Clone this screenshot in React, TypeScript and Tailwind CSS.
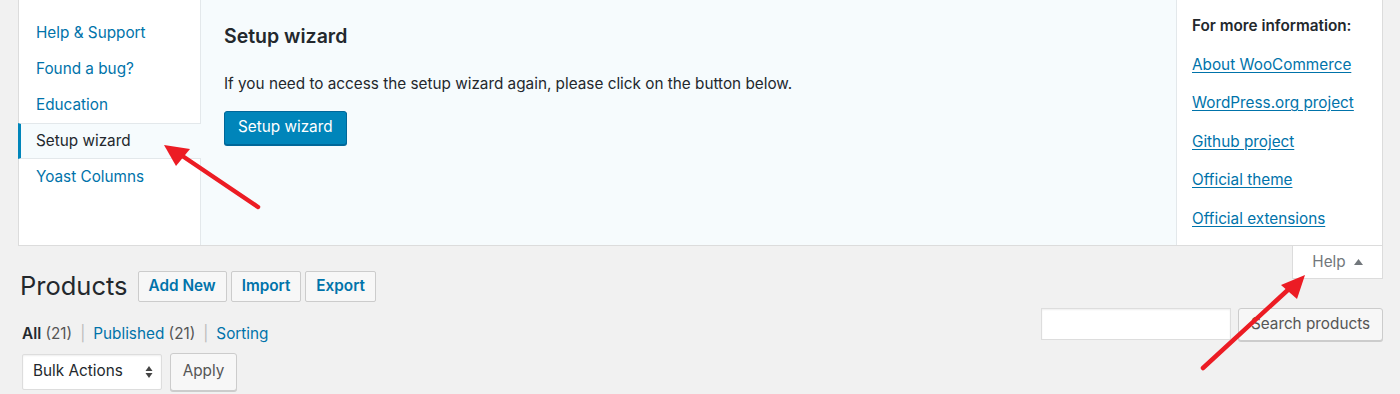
import React from 'react'

const tabs = ['Help & Support', 'Found a bug?', 'Education', 'Setup wizard', 'Yoast Columns']
const moreLinks = ['About WooCommerce', 'WordPress.org project', 'Github project', 'Official theme', 'Official extensions']

function HelpPanel() {
    return (
        <div className="ml-[18px] mr-[17px] h-[246px] flex bg-white border-x border-b border-[#dcdcdc]">
            <ul className="w-[181px] pt-[15px]">
                {tabs.map((t) =>
                    t === 'Setup wizard' ? (
                        <li
                            key={t}
                            className="relative h-[36px] -mr-px flex items-center pl-[15px] bg-[#f6fbfd] border-y border-[#e3e8eb] border-l-[3px] border-l-[#0085ba] -ml-px text-[#23282d]"
                        >
                            {t}
                        </li>
                    ) : (
                        <li key={t} className="h-[36px] flex items-center pl-[17px] text-[#0073aa]">
                            {t}
                        </li>
                    ),
                )}
            </ul>
            <div className="flex-1 bg-[#f6fbfd] border-l border-[#e3e8eb] pl-[23px] pt-[23px]">
                <h2 className="text-[19.5px] font-semibold text-[#23282d] leading-[26px]">Setup wizard</h2>
                <p className="mt-[24px] text-[#23282d]">
                    If you need to access the setup wizard again, please click on the button below.
                </p>
                <button className="mt-[15px] h-[34px] px-[13px] rounded-[3px] bg-[#0085ba] border border-[#006799] text-white shadow-[0_1px_0_#006799]">
                    Setup wizard
                </button>
            </div>
            <div className="w-[206px] bg-white border-l border-[#e3e8eb] pl-[15px] pt-[15px]">
                <p className="font-semibold text-[#23282d]">For more information:</p>
                <ul className="mt-[16px] flex flex-col gap-[16.5px]">
                    {moreLinks.map((l) => (
                        <li key={l} className="leading-[22px] text-[#0073aa] underline underline-offset-2">
                            {l}
                        </li>
                    ))}
                </ul>
            </div>
        </div>
    )
}

function Arrows() {
    return (
        <svg className="absolute inset-0 pointer-events-none" width="1400" height="394">
            <line x1="258" y1="207" x2="178" y2="153" stroke="#ec1c24" strokeWidth="4.5" strokeLinecap="round" />
            <polygon points="164,145 190,149 176,166" fill="#ec1c24" />
            <line x1="1203" y1="368" x2="1290" y2="288" stroke="#ec1c24" strokeWidth="4.5" strokeLinecap="round" />
            <polygon points="1305,275 1281,285 1297,299" fill="#ec1c24" />
        </svg>
    )
}

export default function App() {
    return (
        <div className="relative w-[1400px] h-[394px] overflow-hidden bg-[#f1f1f1] font-['Inter',sans-serif] text-[15.3px]">
            <HelpPanel />
            <div className="flex justify-between">
                <div className="pl-[20px]">
                    <div className="flex items-center mt-[22px] h-[36px]">
                        <h1 className="text-[25.5px] text-[#23282d] mr-[10px] leading-none">Products</h1>
                        <div className="flex gap-[4px]">
                            {['Add New', 'Import', 'Export'].map((b) => (
                                <span
                                    key={b}
                                    className="h-[31px] px-[10px] flex items-center border border-[#cccccc] rounded-[2px] bg-[#f7f7f7] text-[#0073aa] font-semibold"
                                >
                                    {b}
                                </span>
                            ))}
                        </div>
                    </div>
                    <div className="mt-[19px] pl-[2px] flex items-center gap-[8px] text-[#555]">
                        <span>
                            <b className="text-[#23282d] font-semibold">All</b> (21)
                        </span>
                        <span className="text-[#bbb]">|</span>
                        <span>
                            <span className="text-[#0073aa]">Published</span> (21)
                        </span>
                        <span className="text-[#bbb]">|</span>
                        <span className="text-[#0073aa]">Sorting</span>
                    </div>
                    <div className="mt-[8px] flex gap-[8px]">
                        <div className="ml-[2px] w-[140px] h-[36px] flex items-center justify-between pl-[10px] pr-[8px] bg-white border border-[#dddddd] rounded-[2px] shadow-[inset_0_1px_2px_rgba(0,0,0,0.07)] text-[#23282d]">
                            <span>Bulk Actions</span>
                            <svg width="8" height="14" viewBox="0 0 8 14">
                                <path d="M4 1 L7.5 6 H0.5 Z" fill="#444" />
                                <path d="M4 13 L7.5 8 H0.5 Z" fill="#444" />
                            </svg>
                        </div>
                        <div className="w-[67px] h-[38px] -mt-px flex items-center justify-center bg-[#f7f7f7] border border-[#cccccc] rounded-[3px] shadow-[0_1px_0_#cccccc] text-[#555]">
                            Apply
                        </div>
                    </div>
                </div>
                <div className="flex flex-col items-end pr-[17px]">
                    <div className="w-[91px] h-[33px] flex items-center justify-center gap-[8px] bg-white border-x border-b border-[#dcdcdc] text-[#72777c]">
                        <span>Help</span>
                        <svg width="9" height="6" viewBox="0 0 9 6">
                            <path d="M4.5 0 L9 6 H0 Z" fill="#72777c" />
                        </svg>
                    </div>
                    <div className="mt-[29px] flex gap-[7px]">
                        <div className="w-[190px] h-[32px] bg-white border border-[#dddddd] shadow-[inset_0_1px_2px_rgba(0,0,0,0.07)]" />
                        <div className="w-[145px] h-[33px] flex items-center justify-center bg-[#f7f7f7] border border-[#cccccc] rounded-[3px] shadow-[0_1px_0_#cccccc] text-[#555]">
                            Search products
                        </div>
                    </div>
                </div>
            </div>
            <Arrows />
        </div>
    )
}
